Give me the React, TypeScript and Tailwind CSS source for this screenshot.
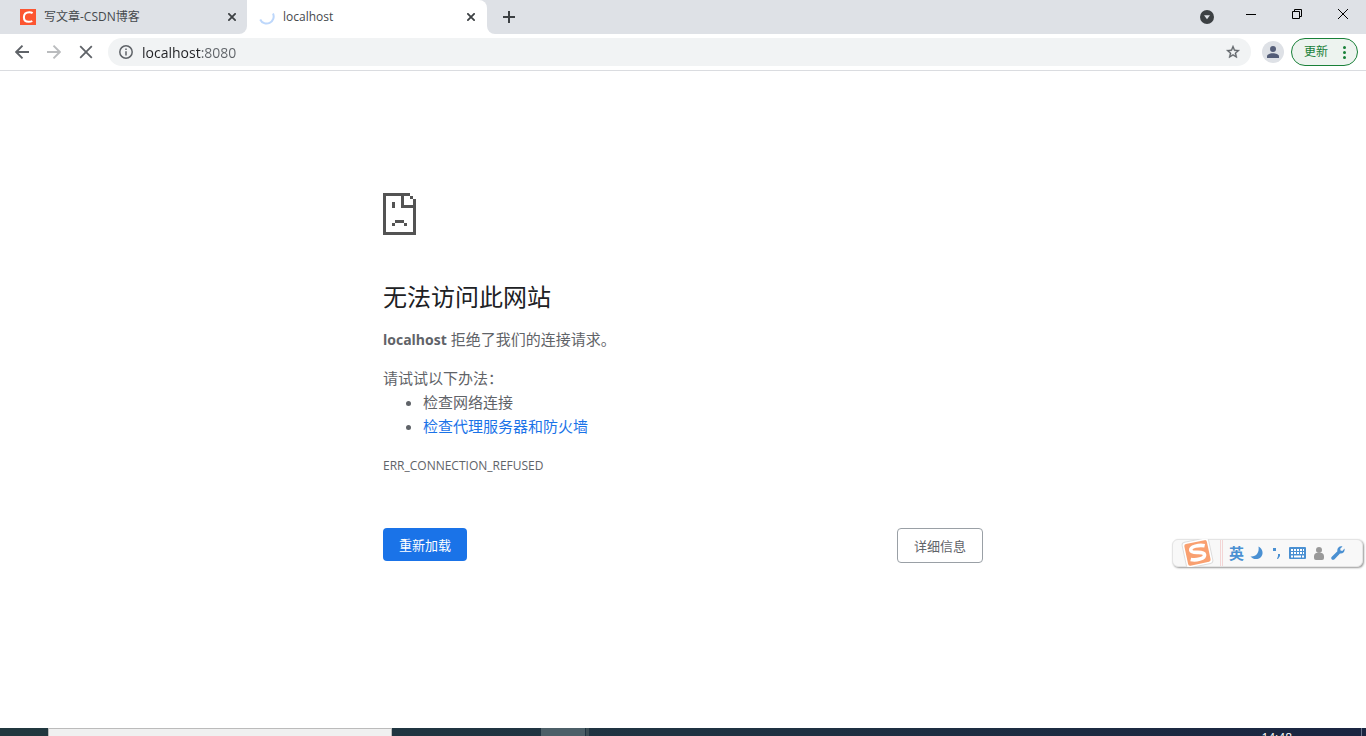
import React from "react";

type TabProps = {
  title: string;
  active?: boolean;
  icon: React.ReactNode;
};

const CsdnIcon = () => (
  <span className="flex h-4 w-4 shrink-0 items-center justify-center bg-[#fc5531]">
    <svg width="16" height="16" viewBox="0 0 16 16" fill="none" stroke="#fff" strokeWidth="2">
      <path d="M12.6 4.1C11.8 3.5 10.6 3.2 9.3 3.2C5.9 3.2 3.9 5.3 3.9 8.3C3.9 11.2 5.7 12.8 8.7 12.8C10.2 12.8 11.4 12.5 12.3 12" />
    </svg>
  </span>
);

const Spinner = () => (
  <svg width="16" height="16" viewBox="0 0 16 16" fill="none" stroke="#bdd7fb" strokeWidth="2" className="shrink-0">
    <path d="M14 4.5A7 7 0 0 1 1.2 10.5" />
  </svg>
);

const Tab = ({ title, active, icon }: TabProps) => (
  <div
    className={
      active
        ? "flex h-full w-60 items-center rounded-t-lg bg-white pr-2 pl-3"
        : "flex h-full w-[247px] items-center rounded-br-lg bg-[#dee1e6] pr-[7px] pl-5"
    }
  >
    {icon}
    <span className="ml-2 grow text-xs text-[#45494d]">{title}</span>
    <button aria-label={"关闭 " + title} className="flex h-4 w-4 items-center justify-center">
      <svg width="8" height="8" viewBox="0 0 8 8" stroke="#3c4043" strokeWidth="1.8">
        <path d="M0.3 0.3L7.7 7.7M7.7 0.3L0.3 7.7" />
      </svg>
    </button>
  </div>
);

const TabStrip = () => (
  <div className="flex h-[34px] shrink-0 items-center bg-[#dee1e6]">
    <div className="flex h-full bg-linear-to-r from-white from-95% to-[#dee1e6] to-95%">
      <Tab title="写文章-CSDN博客" icon={<CsdnIcon />} />
      <Tab title="localhost" active icon={<Spinner />} />
    </div>
    <div className="flex h-full grow items-center bg-white">
      <div className="flex h-full grow items-center rounded-bl-lg bg-[#dee1e6] pl-4">
        <button aria-label="新标签页">
          <svg width="12" height="12" viewBox="0 0 12 12" stroke="#3c4043" strokeWidth="2">
            <path d="M6 0V12M0 6H12" />
          </svg>
        </button>
        <button aria-label="搜索标签页" className="mr-8 ml-auto">
          <svg width="14" height="14" viewBox="0 0 14 14">
            <circle cx="7" cy="7" r="7" fill="#3c4043" />
            <path d="M4 5.2H10L7 9.2Z" fill="#dee1e6" />
          </svg>
        </button>
        <button aria-label="最小化" className="mr-9 mb-1.5">
          <svg width="10" height="10" viewBox="0 0 10 10" stroke="#000">
            <path d="M0 5.5H10" />
          </svg>
        </button>
        <button aria-label="还原" className="mr-9 mb-1.5">
          <svg width="10" height="10" viewBox="0 0 10 10" fill="none" stroke="#000">
            <path d="M0.5 2.5H7.5V9.5H0.5ZM2.5 2.5V0.5H9.5V7.5H7.5" />
          </svg>
        </button>
        <button aria-label="关闭" className="mr-[18px] mb-1.5">
          <svg width="10" height="10" viewBox="0 0 10 10" stroke="#000">
            <path d="M0 0L10 10M10 0L0 10" />
          </svg>
        </button>
      </div>
    </div>
  </div>
);

const Toolbar = () => (
  <div className="flex h-[37px] shrink-0 items-center border-b border-[#dadce0] bg-white pr-2 pl-[15px]">
    <button aria-label="后退" className="mr-[18px]">
      <svg width="14" height="14" viewBox="0 0 14 14" fill="none" stroke="#5f6368" strokeWidth="1.9">
        <path d="M14 7H1.5M7.5 0.7L1.2 7L7.5 13.3" />
      </svg>
    </button>
    <button aria-label="前进" className="mr-[18px]">
      <svg width="14" height="14" viewBox="0 0 14 14" fill="none" stroke="#babcbe" strokeWidth="1.9">
        <path d="M0 7H12.5M6.5 0.7L12.8 7L6.5 13.3" />
      </svg>
    </button>
    <button aria-label="停止加载" className="mr-[15px]">
      <svg width="14" height="14" viewBox="0 0 14 14" stroke="#5f6368" strokeWidth="1.8">
        <path d="M1.2 1.2L12.8 12.8M12.8 1.2L1.2 12.8" />
      </svg>
    </button>
    <div className="flex h-7 grow items-center rounded-full bg-[#f1f3f4] pr-[10px] pl-[11px]">
      <svg width="14" height="14" viewBox="0 0 14 14" fill="none" stroke="#5f6368" strokeWidth="1.5" className="shrink-0">
        <circle cx="7" cy="7" r="6.2" />
        <path d="M7 6.2V10.5M7 3.5V5" />
      </svg>
      <label htmlFor="address" className="sr-only" aria-label="地址"></label>
      {/* host is dark, port is gray */}
      <input
        id="address"
        aria-label="地址"
        defaultValue="localhost:8080"
        className="ml-[9px] h-6 grow bg-[linear-gradient(90deg,#202124_59px,#5f6368_59px)] bg-clip-text text-sm text-transparent outline-none"
      />
      <button aria-label="为此标签页添加书签">
        <svg width="16" height="16" viewBox="0 0 24 24" fill="#5f6368" stroke="#5f6368" strokeWidth="0.5">
          <path d="M22 9.240l-7.190-.62L12 2 9.190 8.630 2 9.240l5.460 4.730L5.820 21 12 17.270 18.180 21l-1.630-7.030L22 9.240zM12 15.400l-3.760 2.270 1-4.280-3.320-2.880 4.380-.38L12 6.100l1.710 4.040 4.380.38-3.320 2.880 1 4.280L12 15.400z" />
        </svg>
      </button>
    </div>
    <button aria-label="用户" className="mr-[7px] ml-[11px]">
      <svg width="22" height="22" viewBox="0 0 22 22">
        <circle cx="11" cy="11" r="11" fill="#dee1e6" />
        <circle cx="11" cy="8" r="3" fill="#545d78" />
        <path d="M5 17V15.2C5 13.2 8.5 12.2 11 12.2S17 13.2 17 15.2V17Z" fill="#545d78" />
      </svg>
    </button>
    <button className="flex h-7 w-[67px] items-center justify-between rounded-full border border-[#188038] bg-[#edf3ef] pr-[11px] pl-3 text-xs text-[#188038]">
      更新
      <svg width="3" height="13" viewBox="0 0 3 13" fill="#188038">
        <circle cx="1.5" cy="1.5" r="1.5" />
        <circle cx="1.5" cy="6.5" r="1.5" />
        <circle cx="1.5" cy="11.5" r="1.5" />
      </svg>
    </button>
  </div>
);

const SadPage = () => (
  <svg width="33" height="42" viewBox="0 0 11 14" fill="#535353" shapeRendering="crispEdges">
    <path d="M0 0H9V1H7V4H10V2H11V14H0ZM1 1V13H10V5H6V1Z" fillRule="evenodd" />
    <path d="M9 1H10V2H9ZM3 3H4V5H3ZM4 9H7V10H4ZM3 10H4V11H3ZM7 10H8V11H7Z" />
  </svg>
);

const ErrorPage = () => (
  <main className="grow overflow-hidden bg-white">
    <div className="mx-auto w-full max-w-[600px] pt-[122px] text-[15px] leading-6 text-[#5f6368]">
      <SadPage />
      <h1 className="mt-[46px] text-2xl text-[#202124]">无法访问此网站</h1>
      <p className="mt-[14px]">
        <strong className="text-sm">localhost</strong> 拒绝了我们的连接请求。
      </p>
      <p className="mt-[15px]">请试试以下办法：</p>
      <ul className="list-disc pl-10">
        <li>检查网络连接</li>
        <li>
          <a href="#buttons" className="text-[#1a73e8]">
            检查代理服务器和防火墙
          </a>
        </li>
      </ul>
      <p className="mt-4 text-xs leading-6">ERR_CONNECTION_REFUSED</p>
      <div id="buttons" className="mt-[50px] flex items-start justify-between text-[13px]">
        <button className="h-[33px] rounded bg-[#1a73e8] px-4 text-white">重新加载</button>
        <button className="h-[35px] rounded border border-[#9aa0a6] px-4">详细信息</button>
      </div>
    </div>
  </main>
);

const ImeBar = () => (
  <div className="absolute top-[539px] right-[3px] flex h-7 w-[191px] items-center rounded-md border border-[#e4e4e4] bg-[#f8f8f8] pl-2 text-[#4a90d2] shadow-[1px_1px_2px_#999999]">
    <svg width="34" height="28" viewBox="0 0 34 28" className="shrink-0">
      <g transform="rotate(-12 16 14)">
        <rect x="3" y="1" width="27" height="26" rx="3" fill="#fff" stroke="#dddddd" />
        <rect x="5" y="3" width="23" height="22" rx="2" fill="#f9a070" />
        <path
          d="M25 8.5C20 6.3 10.5 6 10.5 10.2C10.5 14.5 23 12.4 23 17.2C23 21.5 13 21.2 8.500 19"
          fill="none"
          stroke="#fff"
          strokeWidth="3.6"
        />
      </g>
    </svg>
    <span className="ml-[5px] h-full w-[3px] shrink-0 border-x border-[#f3d5d5]"></span>
    <span className="ml-[6px] text-[15px] font-bold">英</span>
    <svg width="14" height="14" viewBox="0 0 14 14" fill="currentColor" className="ml-[6px]">
      <path d="M8.5 0.5C13 3 14 8 10.5 11.5C7.5 14 3 13.5 0.5 10.5C6 11 9.5 7 8.5 0.5Z" />
    </svg>
    <svg width="10" height="14" viewBox="0 0 10 14" fill="currentColor" className="ml-2">
      <path d="M1 2H4V5H1ZM6 8H8V10L6 13H5L6 10Z" />
    </svg>
    <svg width="18" height="12" viewBox="0 0 18 12" className="ml-[7px]">
      <rect width="17" height="12" rx="1" fill="currentColor" />
      <path d="M2 3H15M2 6H15" stroke="#fff" strokeWidth="2" strokeDasharray="2 1" />
      <path d="M2 9.5H4M5 9.5H12M13 9.5H15" stroke="#fff" strokeWidth="2" />
    </svg>
    <svg width="10" height="13" viewBox="0 0 10 13" fill="#999" className="ml-[7px]">
      <circle cx="5" cy="3" r="3" />
      <path d="M2 6H8Q10 7 10 9V11Q10 13 8 13H2Q0 13 0 11V9Q0 7 2 6Z" />
    </svg>
    <svg width="14" height="14" viewBox="0 0 14 14" fill="currentColor" className="ml-[7px]">
      <path d="M11.5 0.5L9.2 2.8L9.5 4.6L11.3 4.9L13.5 2.6C14.2 5.6 11.8 8 9 7.5L3.5 13.2C2.5 14.2 1 14 0.5 13C0 12.2 0.2 11.4 0.8 10.8L6.4 5.3C5.7 2.3 8.4 -0.4 11.5 0.5Z" />
    </svg>
  </div>
);

const Taskbar = () => (
  <footer className="flex h-2 shrink-0 overflow-hidden bg-linear-to-r from-[#21383f] via-[#1f3342] to-[#1a2541]">
    <div className="ml-12 w-[344px] border border-b-0 border-[#bbbbbb] bg-[#f0f0f0]"></div>
    <div className="ml-[149px] w-11 bg-[#4c5f68]"></div>
    <div className="ml-px w-[3px] bg-[#3b4d55]"></div>
    <time className="mr-[69px] ml-auto pt-0.5 text-xs leading-4 text-white">14:48</time>
    <div className="mr-1 w-px bg-[#69738a]"></div>
  </footer>
);

const App = () => {
  return (
    <div className="relative flex h-screen flex-col overflow-hidden bg-white font-['Open_Sans','Noto_Sans_CJK_SC',sans-serif]">
      <TabStrip />
      <Toolbar />
      <ErrorPage />
      <ImeBar />
      <Taskbar />
    </div>
  );
};

export default App;
